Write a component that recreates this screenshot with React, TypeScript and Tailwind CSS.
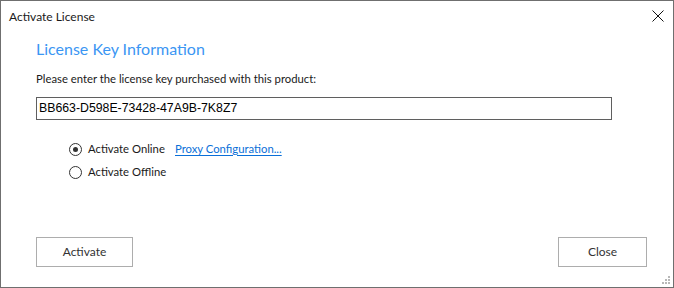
import React from "react";

export default function App() {
  const ui = { fontFamily: 'Lato, "Noto Sans", sans-serif' };
  const ms = { fontFamily: '"Liberation Sans", Arial, sans-serif' };
  return (
    <div className="relative w-[674px] h-[288px] bg-white border border-[#6f6f6f] overflow-hidden text-[#1a1a1a]" style={ui}>
      <div className="flex items-center justify-between h-[31px] pl-[8px] pr-[9px]">
        <span className="text-[12px]">Activate License</span>
        <svg width="12" height="12" viewBox="0 0 12 12" className="mt-[-1px]">
          <path d="M0.5 0.5 L11.5 11.5 M11.5 0.5 L0.5 11.5" stroke="#111" strokeWidth="1" />
        </svg>
      </div>
      <div className="flex flex-col pl-[35px]">
        <div className="text-[16px] leading-[22px] text-[#3b96f3] mt-[6px]">License Key Information</div>
        <div className="text-[11.3px] leading-[16px] mt-[11px]">Please enter the license key purchased with this product:</div>
        <div className="mt-[10px] w-[576px] h-[23px] border border-[#5f5f5f] flex items-center pl-[2px] text-[12.3px] text-black" style={ms}>
          BB663-D598E-73428-47A9B-7K8Z7
        </div>
        <div className="flex flex-col gap-[7px] mt-[21px] pl-[33px] text-[11.3px]">
          <div className="flex items-center h-[16px]">
            <span className="w-[13px] h-[13px] shrink-0 rounded-full border border-[#333] flex items-center justify-center">
              <span className="w-[5px] h-[5px] rounded-full bg-[#333]" />
            </span>
            <span className="ml-[6px] w-[87px] shrink-0">Activate Online</span>
            <span className="text-[#0a6fd8] underline underline-offset-2">Proxy Configuration...</span>
          </div>
          <div className="flex items-center h-[16px]">
            <span className="w-[13px] h-[13px] shrink-0 rounded-full border border-[#333]" />
            <span className="ml-[6px]">Activate Offline</span>
          </div>
        </div>
        <div className="flex justify-between mt-[57px] pr-[26px]">
          <div className="w-[97px] h-[30px] border border-[#adadad] flex items-center justify-center text-[12px] text-[#333]">Activate</div>
          <div className="w-[89px] h-[30px] border border-[#adadad] flex items-center justify-center text-[12px] text-[#333]">Close</div>
        </div>
      </div>
      <svg className="absolute right-[3px] bottom-[3px]" width="8" height="8" viewBox="0 0 8 8">
        <rect x="6" y="0" width="2" height="2" fill="#b8b8b8" />
        <rect x="3" y="3" width="2" height="2" fill="#b8b8b8" />
        <rect x="6" y="3" width="2" height="2" fill="#b8b8b8" />
        <rect x="0" y="6" width="2" height="2" fill="#b8b8b8" />
        <rect x="3" y="6" width="2" height="2" fill="#b8b8b8" />
        <rect x="6" y="6" width="2" height="2" fill="#b8b8b8" />
      </svg>
    </div>
  );
}
